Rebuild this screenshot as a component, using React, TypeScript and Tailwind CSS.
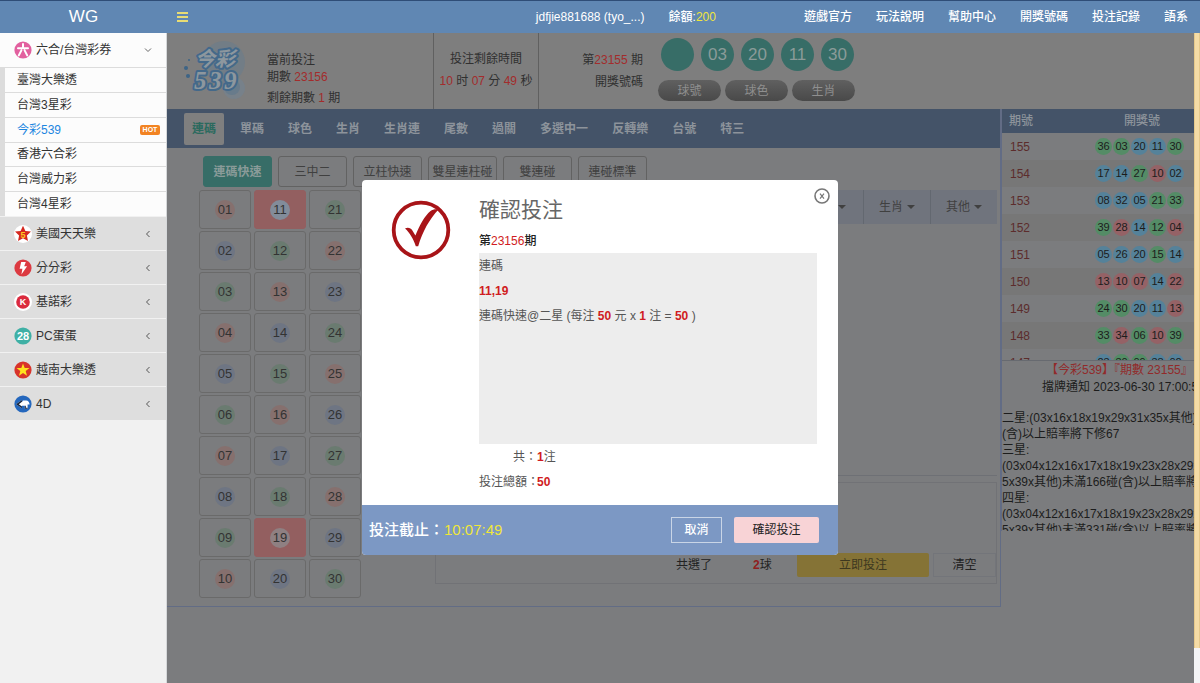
import React, { useState } from "react";
import clsx from "clsx";

const topLinks = ["遊戲官方", "玩法說明", "幫助中心", "開獎號碼", "投注記錄", "語系"];
const subGames = ["臺灣大樂透", "台灣3星彩", "今彩539", "香港六合彩", "台灣威力彩", "台灣4星彩"];
const tabs = ["連碼", "單碼", "球色", "生肖", "生肖連", "尾數", "過關", "多選中一", "反轉樂", "台號", "特三"];
const plays = ["連碼快速", "三中二", "立柱快速", "雙星連柱碰", "雙連碰", "連碰標準"];
const filters = ["生肖", "其他"];
const lastBalls = ["", "03", "20", "11", "30"];

type Ball = [string, "g" | "b" | "r"];

const history: { no: string; balls: Ball[] }[] = [
  { no: "155", balls: [["36", "g"], ["03", "g"], ["20", "b"], ["11", "b"], ["30", "g"]] },
  { no: "154", balls: [["17", "b"], ["14", "b"], ["27", "g"], ["10", "r"], ["02", "b"]] },
  { no: "153", balls: [["08", "b"], ["32", "b"], ["05", "b"], ["21", "g"], ["33", "g"]] },
  { no: "152", balls: [["39", "g"], ["28", "r"], ["14", "b"], ["12", "g"], ["04", "r"]] },
  { no: "151", balls: [["05", "b"], ["26", "b"], ["20", "b"], ["15", "g"], ["14", "b"]] },
  { no: "150", balls: [["13", "r"], ["10", "r"], ["07", "r"], ["14", "b"], ["22", "r"]] },
  { no: "149", balls: [["24", "g"], ["30", "g"], ["20", "b"], ["11", "b"], ["13", "r"]] },
  { no: "148", balls: [["33", "g"], ["34", "r"], ["06", "g"], ["10", "r"], ["39", "g"]] },
  { no: "147", balls: [["23", "b"], ["30", "g"], ["09", "g"], ["38", "b"], ["02", "b"]] },
];

const historyColors = {
  g: "bg-[#548c66]",
  b: "bg-[#55829a]",
  r: "bg-[#956266]",
};

const pickColors = ["bg-[#6a7b70]", "bg-[#86706e]", "bg-[#6e7583]"];
const activeColors = ["bg-[#8a9a90]", "bg-[#8f8082]", "bg-[#828c9a]"];

const numbers = Array.from({ length: 30 }, (_, i) => i + 1);

const StarIcon = () => (
  <svg viewBox="0 0 18 18" className="size-[18px]">
    <circle cx="9" cy="9" r="9" fill="#fff" />
    <path d="M9 .8l2.4 5.1 5.6.7-4.1 3.8 1.1 5.6L9 13.2 4 16l1.1-5.6L1 6.6l5.6-.7z" fill="#d5281f" />
    <text x="9" y="12.5" textAnchor="middle" fontSize="9" fontWeight="bold" fill="#ffc81e">5</text>
  </svg>
);

const BoltIcon = () => (
  <svg viewBox="0 0 18 18" className="size-[18px]">
    <circle cx="9" cy="9" r="8.6" fill="#dc3a41" />
    <path d="M7.2 3h4.6l-1.6 4.2h2.9L7.4 15.4l1-5.6H5.6z" fill="#fff" />
  </svg>
);

const KenoIcon = () => (
  <svg viewBox="0 0 18 18" className="size-[18px]">
    <circle cx="9" cy="9" r="9" fill="#fff" />
    <circle cx="9" cy="9" r="6.8" fill="#db2b3e" />
    <text x="9" y="12.3" textAnchor="middle" fontSize="9" fontWeight="bold" fill="#fff">K</text>
  </svg>
);

const EggIcon = () => (
  <svg viewBox="0 0 18 18" className="size-[18px]">
    <circle cx="9" cy="9" r="8.6" fill="#3fb0a5" />
    <text x="9" y="13" textAnchor="middle" fontSize="11" fontWeight="bold" fill="#fff">28</text>
  </svg>
);

const VietnamIcon = () => (
  <svg viewBox="0 0 18 18" className="size-[18px]">
    <circle cx="9" cy="9" r="8.6" fill="#d8342b" />
    <path d="M9 2.4l1.7 4.5 4.8.2-3.8 3 1.3 4.6-4-2.6-4 2.6 1.3-4.6-3.8-3 4.8-.2z" fill="#ffe21f" />
  </svg>
);

const FourDIcon = () => (
  <svg viewBox="0 0 18 18" className="size-[18px]">
    <circle cx="9" cy="9" r="8.6" fill="#2467bd" />
    <path d="M2 9.2L8 5v2l1-1.600h3.200c2 0 3.400 1.600 3.400 4.200h-2v4.200h-2.800v-3H8v2.400z" fill="#fff" />
    <path d="M8 5L2 9.200l6 4v-1.600L4.800 9.200 8 6.800z" fill="#17263f" />
    <path d="M10.800 10.800v3h2.800v-1h-1.800v-2z" fill="#17263f" />
  </svg>
);

const LotteryIcon = () => (
  <svg viewBox="0 0 18 18" className="size-[18px]">
    <circle cx="9" cy="9" r="8.6" fill="#e2609f" />
    <path d="M9 3v3M4 7.2h10M7.4 9.4l-2.6 5M10.6 9.4l2.6 5" stroke="#fff" strokeWidth="2" fill="none" strokeLinecap="round" />
  </svg>
);

const groups = [
  { name: "美國天天樂", icon: <StarIcon /> },
  { name: "分分彩", icon: <BoltIcon /> },
  { name: "基諾彩", icon: <KenoIcon /> },
  { name: "PC蛋蛋", icon: <EggIcon /> },
  { name: "越南大樂透", icon: <VietnamIcon /> },
  { name: "4D", icon: <FourDIcon /> },
];

const GameLogo = () => (
  <svg viewBox="0 0 64 62" className="w-16 h-[62px] shrink-0" role="img" aria-label="今彩539">
    <circle cx="41" cy="22" r="21" fill="#727d86" />
    <circle cx="51" cy="48" r="11" fill="#77818a" />
    <circle cx="49" cy="47" r="8" fill="#687b8b" />
    <circle cx="6" cy="20" r="1" fill="#3d6486" />
    <circle cx="3" cy="28" r="2" fill="#3d6486" />
    <circle cx="5" cy="36" r="2" fill="#3d6486" />
    <g fontWeight="bold" fontStyle="italic" fill="#8d979e" stroke="#44698a" paintOrder="stroke" strokeLinejoin="round">
      <text x="12" y="26" fontSize="20" strokeWidth="4">今彩</text>
      <text x="11" y="49" fontSize="25" strokeWidth="4" fontFamily="Liberation Serif, serif">5</text>
      <text x="26" y="49" fontSize="25" strokeWidth="4" fontFamily="Liberation Serif, serif">3</text>
      <text x="41" y="49" fontSize="25" strokeWidth="4" fontFamily="Liberation Serif, serif">9</text>
    </g>
  </svg>
);

const Red = ({ children }: { children: React.ReactNode }) => (
  <b className="text-[#d01c22]">{children}</b>
);

const Header = () => (
  <header className="flex h-[33px] items-center border-t border-[#2f4d77] bg-[#6087b3] text-white">
    <div className="w-[167px] shrink-0 text-center text-[17px]">WG</div>
    <button type="button" aria-label="選單" className="ml-2.5 flex w-[11px] flex-col gap-0.5">
      <span className="h-0.5 bg-[#e8dc74]" />
      <span className="h-0.5 bg-[#e8dc74]" />
      <span className="h-0.5 bg-[#e8dc74]" />
    </button>
    <div className="ml-auto flex items-center gap-6 pr-3 font-medium whitespace-nowrap">
      <span>jdfjie881688 (tyo_...)</span>
      <span className="mr-16">
        餘額:<span className="text-[#f0e53b]">200</span>
      </span>
      {topLinks.map((link) => (
        <a key={link} href="#">{link}</a>
      ))}
    </div>
  </header>
);

const Sidebar = () => (
  <aside className="w-[167px] shrink-0 border-r border-[#d6d8da] bg-[#f1f1f1] text-[#333]">
    <button type="button" className="flex h-[34px] w-full items-center gap-1 bg-[#fcfcfc] pr-3.5 pl-3.5 text-left">
      <LotteryIcon />
      <span className="flex-1">六合/台灣彩券</span>
      <svg viewBox="0 0 8 8" className="size-2"><path d="M1 2.5l3 3 3-3" fill="none" stroke="#666" /></svg>
    </button>
    <ul className="grid h-[149px] grid-rows-6 border-l-5 border-[#dcdcdc]">
      {subGames.map((game) => (
        <li key={game} className="flex items-center justify-between border-t border-[#dcdcdc] bg-[#fcfcfc] pr-1.5 pl-3">
          <a href="#" className={clsx(game === "今彩539" && "text-[#1c86e0]")}>{game}</a>
          {game === "今彩539" && (
            <span className="w-5 rounded-xs bg-[#f28322] text-center text-[7px] leading-[10px] font-bold text-white">HOT</span>
          )}
        </li>
      ))}
    </ul>
    {groups.map((group) => (
      <button
        key={group.name}
        type="button"
        className="flex h-[34px] w-full items-center gap-1 border-t border-[#f1f1f1] bg-[#dedede] pr-3.5 pl-3.5 text-left"
      >
        {group.icon}
        <span className="flex-1">{group.name}</span>
        <svg viewBox="0 0 8 8" className="size-2"><path d="M5.5 1l-3 3 3 3" fill="none" stroke="#555" /></svg>
      </button>
    ))}
  </aside>
);

const DrawInfo = () => (
  <section className="flex h-[76px] items-center whitespace-nowrap">
    <div className="ml-4"><GameLogo /></div>
    <div className="ml-5 w-[166px] pt-4 leading-[17px]">
      <p>當前投注</p>
      <p>期數 <span className="text-[#a32c2c]">23156</span></p>
      <p className="mt-1">剩餘期數 <span className="text-[#a32c2c]">1</span> 期</p>
    </div>
    <div className="h-full w-[106px] border-x border-[#606060] pt-[15px] text-center leading-[22px]">
      <p>投注剩餘時間</p>
      <p>
        <span className="text-[#a32c2c]">10</span> 时 <span className="text-[#a32c2c]">07</span> 分{" "}
        <span className="text-[#a32c2c]">49</span> 秒
      </p>
    </div>
    <div className="w-[104px] text-right leading-[22px]">
      <p>第<span className="text-[#a32c2c]">23155</span> 期</p>
      <p>開獎號碼</p>
    </div>
    <div className="ml-[15px] flex flex-col gap-[9px] pb-[3px]">
      <div className="flex gap-[7px] px-[3px]">
        {lastBalls.map((ball, i) => (
          <span key={i} className="flex size-[33px] items-center justify-center rounded-full bg-[#376d67] text-[17px] text-[#8a9b99]">
            {ball}
          </span>
        ))}
      </div>
      <div className="flex gap-1">
        {["球號", "球色", "生肖"].map((mode) => (
          <button key={mode} type="button" className="h-[21px] w-[63px] rounded-full bg-linear-to-b from-[#606060] to-[#494949] text-[#8f8f8f]">
            {mode}
          </button>
        ))}
      </div>
    </div>
  </section>
);

const NumberGrid = ({ picked, onPick }: { picked: number[]; onPick: (n: number) => void }) => (
  <div className="grid shrink-0 grid-flow-col grid-cols-[repeat(3,52px)] grid-rows-[repeat(10,39px)] gap-x-[3px] gap-y-0.5">
    {numbers.map((n) => {
      const active = picked.includes(n);
      return (
        <button
          key={n}
          type="button"
          onClick={() => onPick(n)}
          className={clsx(
            "flex items-center justify-center rounded-[3px] border text-[13px] text-[#333]",
            active ? "border-[#935f60] bg-[#935f60]" : "border-[#6a6a6a]"
          )}
        >
          <span className={clsx("flex size-5 items-center justify-center rounded-full", active ? activeColors[n % 3] : pickColors[n % 3])}>
            {String(n).padStart(2, "0")}
          </span>
        </button>
      );
    })}
  </div>
);

const BetPanel = () => {
  const [picked, setPicked] = useState([11, 19]);

  const toggle = (n: number) =>
    setPicked((prev) => (prev.includes(n) ? prev.filter((p) => p !== n) : [...prev, n]));

  return (
    <section className="min-w-0 flex-1 border-r border-b border-[#626c85]">
      <nav className="flex h-[39px] items-center gap-2 bg-[#445368] pl-[17px] font-bold text-[#8d939b]">
        {tabs.map((tab, i) => (
          <button
            key={tab}
            type="button"
            className={clsx("rounded-xs px-2 whitespace-nowrap", i === 0 && "h-8 bg-[#7f7f7f] text-[#2b6a5e]")}
          >
            {tab}
          </button>
        ))}
      </nav>
      <div className="flex gap-1.5 pt-2 pl-9">
        {plays.map((play, i) => (
          <button
            key={play}
            type="button"
            className={clsx(
              "h-[31px] w-[69px] rounded-[3px] border whitespace-nowrap",
              i === 0 ? "border-[#376d67] bg-[#376d67] font-bold text-[#8a9b99]" : "border-[#626262] text-[#404040]"
            )}
          >
            {play}
          </button>
        ))}
      </div>
      <div className="flex pt-[3px] pb-2 pl-8">
        <NumberGrid picked={picked} onPick={toggle} />
        <div className="ml-[74px] flex flex-1 flex-col pr-[3px] pb-3.5">
          <div className="flex h-[34px] justify-end bg-[#70747d] text-[#404040]">
            <button type="button" aria-label="更多" className="flex w-[67px] items-center justify-center">
              <span className="ml-6 border-4 border-b-0 border-transparent border-t-[#404040]" />
            </button>
            {filters.map((filter) => (
              <button key={filter} type="button" className="flex w-[67px] items-center justify-center gap-1 border-l border-[#636870]">
                {filter}
                <span className="border-4 border-b-0 border-transparent border-t-[#404040]" />
              </button>
            ))}
          </div>
          <div className="flex-1 border-b border-[#6e7075]" />
          <div className="mt-1.5 flex h-[102px] items-end justify-end border border-[#717276] pb-1.5 leading-6 text-[#222]">
            <span className="w-[77px]">共選了</span>
            <span className="w-11"><b className="text-[#8f2020]">{picked.length}</b>球</span>
            <button type="button" className="h-6 w-[132px] rounded-xs bg-[#857336] text-[#3d3820]">立即投注</button>
            <button type="button" className="ml-1 h-6 w-[63px] border border-[#73757a] leading-5">清空</button>
          </div>
        </div>
      </div>
    </section>
  );
};

const ResultsPanel = () => (
  <aside className="w-[193px] shrink-0 border-l border-[#626c85]">
    <div className="h-[252px] overflow-hidden border-b border-[#676a70]">
      <table className="w-full text-left">
        <thead>
          <tr className="h-6 bg-[#445368] text-[#8d939b]">
            <th className="pl-[7px] font-medium">期號</th>
            <th className="pr-6 text-right font-medium"><span className="pr-2.5">開獎號</span></th>
          </tr>
        </thead>
        <tbody>
          {history.map((row, i) => (
            <tr key={row.no} className={clsx("h-[27px]", i % 2 === 1 && "bg-[#777]")}>
              <td className="pl-2 text-[#5c2c2c]">{row.no}</td>
              <td>
                <div className="flex justify-end gap-px pr-2.5">
                  {row.balls.map(([num, color]) => (
                    <span
                      key={num}
                      className={clsx(
                        "flex size-[17px] items-center justify-center rounded-full text-[11px] text-[#1c1c1c]",
                        historyColors[color]
                      )}
                    >
                      {num}
                    </span>
                  ))}
                </div>
              </td>
            </tr>
          ))}
        </tbody>
      </table>
    </div>
    <div className="h-[170px] overflow-hidden pt-px leading-4 whitespace-nowrap text-[#1c1c1c]">
      <p className="pl-11 leading-[17px] text-[#922a2a]">【今彩539】『期數 23155』</p>
      <p className="pl-10 leading-[17px]">擋牌通知 2023-06-30 17:00:50</p>
      <p className="mt-3.5">二星:(03x16x18x19x29x31x35x其他):</p>
      <p>(含)以上賠率將下修67</p>
      <p>三星:</p>
      <p>(03x04x12x16x17x18x19x23x28x29x</p>
      <p>5x39x其他)未滿166碰(含)以上賠率將</p>
      <p>四星:</p>
      <p>(03x04x12x16x17x18x19x23x28x29x</p>
      <p>5x39x其他)未滿331碰(含)以上賠率將</p>
    </div>
  </aside>
);

const ConfirmDialog = ({ onClose }: { onClose: () => void }) => (
  <div className="fixed inset-0 flex items-start justify-center pt-[180px]">
    <div role="dialog" aria-labelledby="confirm-title" className="relative w-[476px] overflow-hidden rounded-[4px] bg-white text-[#555]">
      <button type="button" aria-label="關閉" onClick={onClose} className="absolute top-2 right-2">
        <svg viewBox="0 0 16 16" className="size-4" fill="none" stroke="#777">
          <circle cx="8" cy="8" r="7" strokeWidth="1.6" />
          <path d="M6 5.600l4 5M10 5.600l-4 5" strokeWidth="1.2" />
        </svg>
      </button>
      <div className="flex px-[21px] pt-4 pb-2.5">
        <svg viewBox="0 0 60 60" className="mt-1 ml-2 size-[60px] shrink-0">
          <circle cx="30" cy="30" r="27.3" fill="none" stroke="#a81418" strokeWidth="3.8" />
          <path
            d="M14 28.500c2.800-1.500 5.800-.6 7.400 2l3 5C29 24.500 33.500 16 39.500 11c2-1.600 5-2.200 8-1.600C39 18.500 31.500 31 27.200 46.200h-2.400C22.500 39 18.600 32.500 14 28.500z"
            fill="#a81418"
          />
        </svg>
        <div className="ml-7 flex-1">
          <h2 id="confirm-title" className="text-[21px] leading-7 text-[#666]">確認投注</h2>
          <p className="mt-[5px] leading-6 font-medium text-[#222]">
            第<span className="text-[#d01c22]">23156</span>期
          </p>
          <div className="h-[191px] bg-[#ededed] pt-px leading-[25px]">
            <p>連碼</p>
            <p><Red>11,19</Red></p>
            <p>
              連碼快速@二星 (每注 <Red>50</Red> 元 x <Red>1</Red> 注 = <Red>50</Red> )
            </p>
          </div>
          <div className="pt-px leading-[25px]">
            <p><span className="inline-block w-[58px] text-right">共：</span><Red>1</Red>注</p>
            <p><span className="inline-block w-[58px] whitespace-nowrap">投注總額：</span><Red>50</Red></p>
          </div>
        </div>
      </div>
      <div className="flex h-[50px] items-center bg-[#7c98c4] pr-[19px] pl-[7px] text-white">
        <span className="text-[15px] font-medium">
          投注截止：<span className="text-[#efe63a]">10:07:49</span>
        </span>
        <button type="button" onClick={onClose} className="ml-auto h-[26px] w-[51px] border border-[#c9d5e6] font-medium">取消</button>
        <button type="button" className="ml-3 h-[26px] w-[85px] rounded-xs bg-[#f8d3d6] text-[#222]">確認投注</button>
      </div>
    </div>
  </div>
);

export default function App() {
  const [confirmOpen, setConfirmOpen] = useState(true);

  return (
    <div className="flex min-h-screen flex-col font-['Liberation_Sans','Noto_Sans_CJK_TC',sans-serif] text-[12px]">
      <Header />
      <div className="flex flex-1">
        <Sidebar />
        <main className="min-w-0 flex-1 bg-[#7b7c7e] text-[#303030]">
          <div className="bg-[#7e7e7e]">
            <DrawInfo />
          </div>
          <div className="flex items-start">
            <BetPanel />
            <ResultsPanel />
          </div>
        </main>
        <div className="flex w-1.5 flex-col bg-[#f4f4f6]">
          <div className="h-[615px] border-x border-[#e6c98c] bg-[#f5dca6]" />
        </div>
      </div>
      {confirmOpen && <ConfirmDialog onClose={() => setConfirmOpen(false)} />}
    </div>
  );
}
